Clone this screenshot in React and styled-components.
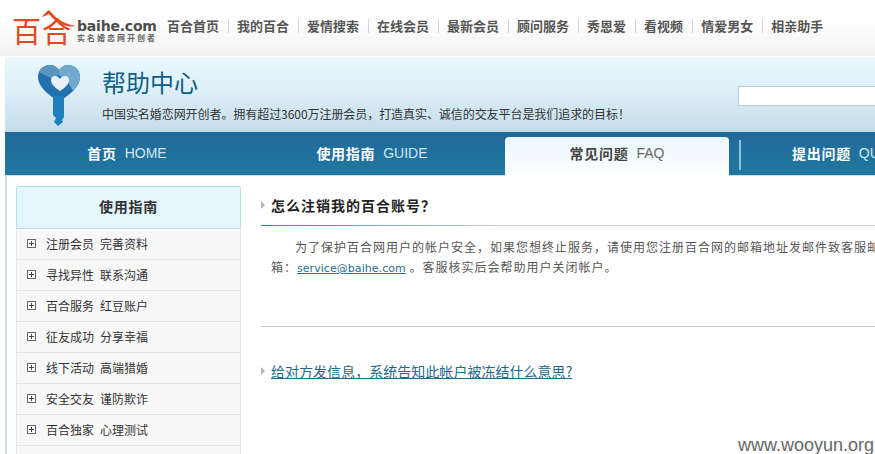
import React from "react";
import styled, { createGlobalStyle } from "styled-components";

const GlobalStyle = createGlobalStyle`
  html, body {
    margin: 0;
    padding: 0;
    background: #fff;
    overflow: hidden;
  }
  body {
    font-family: "Noto Sans CJK SC", "Liberation Sans", sans-serif;
    font-size: 12px;
    color: #333;
  }
`;

const Page = styled.div`
  position: relative;
  width: 875px;
  height: 454px;
  overflow: hidden;
  background: #fff;
`;

const TopBar = styled.div`
  display: flex;
  align-items: center;
  height: 56px;
  padding-left: 12px;
  background: linear-gradient(#fff 0%, #fff 35%, #f3f1f1 100%);
`;

const Logo = styled.div`
  position: relative;
  display: flex;
  align-items: center;
  width: 155px;
  height: 56px;
  flex-shrink: 0;
`;

const LogoMark = styled.span`
  width: 65px;
  font-size: 29px;
  line-height: 34px;
  letter-spacing: 1px;
  color: #e2481d;
  white-space: nowrap;
  margin-top: 3px;
`;

const Swoosh = styled.svg`
  position: absolute;
  left: 28px;
  top: 8px;
`;

const LogoWords = styled.div`
  display: flex;
  flex-direction: column;
  margin-top: 5px;
`;

const LogoDomain = styled.span`
  font-family: "DejaVu Sans", sans-serif;
  font-size: 14px;
  font-weight: 700;
  line-height: 14px;
  letter-spacing: -0.2px;
  color: #4d4d4d;
`;

const LogoSlogan = styled.span`
  font-size: 8px;
  font-weight: 700;
  line-height: 9px;
  letter-spacing: 2px;
  color: #666;
  white-space: nowrap;
`;

const Nav = styled.nav`
  display: flex;
  align-items: center;
  margin-top: -4px;
`;

const NavItem = styled.a`
  font-size: 13px;
  font-weight: 700;
  line-height: 14px;
  color: #555;
  padding-right: 9px;
  margin-right: 8px;
  border-right: 1px solid ${({ $last }) => ($last ? "transparent" : "#d4d4d4")};
  white-space: nowrap;
`;

const Main = styled.div`
  margin-left: 5px;
  border-left: 2px solid #c9dfe6;
  height: 398px;
`;

const Header = styled.div`
  display: flex;
  height: 75px;
  margin-left: -2px;
  margin-top: 1px;
  background: linear-gradient(#eaf8fe 0%, #dff0f8 40%, #c4dde9 100%);
`;

const KeyIcon = styled.svg`
  margin: 8px 0 0 32px;
  flex-shrink: 0;
`;

const HeaderText = styled.div`
  display: flex;
  flex-direction: column;
  margin-left: 21px;
  padding-top: 9px;
`;

const HeaderTitle = styled.h1`
  margin: 0;
  font-size: 24px;
  font-weight: 400;
  line-height: 32px;
  color: #0f5f86;
`;

const HeaderSlogan = styled.p`
  margin: 7px 0 0;
  font-size: 12px;
  line-height: 18px;
  letter-spacing: -0.06px;
  color: #333;
  white-space: nowrap;
`;

const SearchInput = styled.input`
  position: absolute;
  left: 738px;
  top: 86px;
  width: 200px;
  height: 18px;
  padding: 0;
  border: 1px solid #bccdd8;
  background: #fff;
`;

const Tabs = styled.div`
  display: flex;
  gap: 21px;
  height: 43px;
  margin-left: -2px;
  padding-left: 10px;
  background: linear-gradient(#22689a, #20789f);
  border-bottom: 1px solid #c9e2ea;
`;

const Tab = styled.a`
  position: relative;
  display: flex;
  align-items: center;
  justify-content: center;
  gap: 8px;
  flex: 0 0 224px;
  height: ${({ $active }) => ($active ? "39px" : "43px")};
  margin-top: ${({ $active }) => ($active ? "5px" : "0")};
  padding-bottom: ${({ $active }) => ($active ? "7px" : "1px")};
  box-sizing: border-box;
  border-radius: ${({ $active }) => ($active ? "4px 4px 0 0" : "0")};
  background: ${({ $active }) =>
    $active ? "linear-gradient(#e8f7fd, #fff)" : "transparent"};
  color: ${({ $active }) => ($active ? "#444" : "#fff")};
  white-space: nowrap;
`;

const TabDivider = styled.span`
  position: absolute;
  right: -12px;
  top: 3px;
  height: 30px;
  width: 2px;
  background: #8fc3dd;
`;

const TabName = styled.span`
  font-size: 14px;
  font-weight: 700;
  letter-spacing: 0.7px;
`;

const TabEnglish = styled.span`
  font-family: "Liberation Sans", sans-serif;
  font-size: 14px;
  color: ${({ $active }) => ($active ? "#666" : "#cfe6f1")};
`;

const Body = styled.div`
  display: flex;
  gap: 20px;
  padding: 10px 0 0 9px;
`;

const Sidebar = styled.aside`
  flex: 0 0 225px;
  width: 225px;
`;

const SidebarTitle = styled.div`
  height: 43px;
  box-sizing: border-box;
  line-height: 38px;
  text-align: center;
  font-size: 14px;
  font-weight: 700;
  letter-spacing: 0.7px;
  color: #333;
  background: #e3f6fc;
  border: 1px solid #b7e0ea;
  border-radius: 2px 2px 0 0;
`;

const SidebarList = styled.ul`
  margin: 0;
  padding: 0;
  list-style: none;
  border: 1px solid #e6e6e6;
  border-width: 0 1px;
`;

const SidebarRow = styled.li`
  display: flex;
  align-items: center;
  gap: 10px;
  height: 31px;
  box-sizing: border-box;
  padding: 0 0 2px 10px;
  background: #f8f8f8;
  border-bottom: 1px solid #e5e5e5;
  font-size: 12px;
  color: #333;
  white-space: nowrap;
`;

const PlusIcon = styled.svg`
  flex-shrink: 0;
`;

const RowText = styled.span`
  display: flex;
  gap: 6px;
`;

const Content = styled.main`
  flex: 1 0 700px;
`;

const QuestionTitle = styled.h2`
  display: flex;
  align-items: center;
  gap: 6px;
  height: 40px;
  box-sizing: border-box;
  padding-bottom: 2px;
  margin: 0;
  font-size: 14px;
  font-weight: 700;
  letter-spacing: 1px;
  color: #222;
  border-bottom: 1px solid transparent;
  border-image: linear-gradient(90deg, #2a88a8, #cfcfcf 35%) 1;
`;

const Arrow = styled.svg`
  flex-shrink: 0;
`;

const Answer = styled.p`
  margin: 11px 0 0;
  padding-left: 10px;
  font-size: 12px;
  line-height: 20px;
  letter-spacing: 1px;
  color: #555;
  white-space: nowrap;
`;

const Indent = styled.span`
  padding-left: 24px;
`;

const Email = styled.a`
  color: #1f6f96;
  text-decoration: underline;
  letter-spacing: 0.05px;
  font-family: "DejaVu Sans", sans-serif;
  font-size: 11px;
`;

const Rule = styled.hr`
  height: 1px;
  margin: 47px 0 0;
  border: 0;
  background: #ccc;
`;

const NextQuestion = styled.div`
  display: flex;
  align-items: center;
  gap: 6px;
  margin-top: 34px;
`;

const NextLink = styled.a`
  font-size: 14px;
  line-height: 20px;
  letter-spacing: 0.03px;
  color: #1b6a8a;
  text-decoration: underline;
  white-space: nowrap;
`;

const Watermark = styled.div`
  position: absolute;
  right: 1px;
  bottom: -1px;
  font-family: "Liberation Sans", sans-serif;
  font-size: 18px;
  line-height: 20px;
  color: #666;
`;

const navItems = [
  "百合首页",
  "我的百合",
  "爱情搜索",
  "在线会员",
  "最新会员",
  "顾问服务",
  "秀恩爱",
  "看视频",
  "情爱男女",
  "相亲助手",
];

const tabs = [
  { name: "首页", english: "HOME" },
  { name: "使用指南", english: "GUIDE" },
  { name: "常见问题", english: "FAQ", active: true },
  { name: "提出问题", english: "QUESTION" },
];

const guideRows = [
  ["注册会员", "完善资料"],
  ["寻找异性", "联系沟通"],
  ["百合服务", "红豆账户"],
  ["征友成功", "分享幸福"],
  ["线下活动", "高端猎婚"],
  ["安全交友", "谨防欺诈"],
  ["百合独家", "心理测试"],
  ["", ""],
];

const ArrowIcon = () => (
  <Arrow width="4" height="8" viewBox="0 0 4 8">
    <path d="M0 0 L4 4 L0 8 Z" fill="#b5b5b5" />
  </Arrow>
);

const App = () => {
  return (
    <Page>
      <GlobalStyle />
      <TopBar>
        <Logo>
          <LogoMark>百合</LogoMark>
          <Swoosh width="40" height="22" viewBox="0 0 40 22">
            <path d="M2 9 C5 5 7 3 9 2 C14 8 22 16 36 18 C26 20 16 15 9 6 C7 7 5 8 2 9 Z" fill="#e2481d" />
          </Swoosh>
          <LogoWords>
            <LogoDomain>baihe.com</LogoDomain>
            <LogoSlogan>实名婚恋网开创者</LogoSlogan>
          </LogoWords>
        </Logo>
        <Nav>
          {navItems.map((item, i) => (
            <NavItem key={item} $last={i === navItems.length - 1}>
              {item}
            </NavItem>
          ))}
        </Nav>
      </TopBar>
      <Main>
        <Header>
          <KeyIcon width="44" height="61" viewBox="0 0 44 61">
            <path d="M22 37 C12 30 1 22 1 12 C1 5 7 0 13 0 C17 0 20 2 22 5 C24 2 27 0 31 0 C38 0 43 5 43 12 C43 22 32 30 22 37 Z" fill="#2270ae" />
            <path d="M22 5 C24 2 27 0 31 0 C38 0 43 5 43 12 C43 17 40 22 36 26 C34 22 32 19 30 16 L22 10 Z" fill="#74a9cf" />
            <path d="M22 5 C20 2 17 0 13 0 C8 0 4 2 2 7 L14 13 L22 10 Z" fill="#5a94c0" />
            <path d="M23 26 C17 22 14 19 14 15 C14 12 16 11 18 11 C20 11 22 12 23 14 C24 12 26 11 28 11 C30 11 32 12 32 15 C32 19 29 22 23 26 Z" fill="#e6f2f8" />
            <path d="M16 31 L27 31 L27 52 L25 55 L26 57 L21 61 L17 57 L19 53 L16 50 Z" fill="#1f80bd" />
          </KeyIcon>
          <HeaderText>
            <HeaderTitle>帮助中心</HeaderTitle>
            <HeaderSlogan>
              中国实名婚恋网开创者。拥有超过3600万注册会员，打造真实、诚信的交友平台是我们追求的目标！
            </HeaderSlogan>
          </HeaderText>
        </Header>
        <SearchInput />
        <Tabs>
          {tabs.map((tab) => (
            <Tab key={tab.english} $active={tab.active}>
              <TabName>{tab.name}</TabName>
              <TabEnglish $active={tab.active}>{tab.english}</TabEnglish>
              {tab.active && <TabDivider />}
            </Tab>
          ))}
        </Tabs>
        <Body>
          <Sidebar>
            <SidebarTitle>使用指南</SidebarTitle>
            <SidebarList>
              {guideRows.map(([first, second], i) => (
                <SidebarRow key={i}>
                  {first && (
                    <PlusIcon width="9" height="9" viewBox="0 0 9 9">
                      <rect x="0.5" y="0.5" width="8" height="8" fill="#fff" stroke="#666" />
                      <path d="M2 4.5 H7 M4.5 2 V7" stroke="#444" />
                    </PlusIcon>
                  )}
                  <RowText>
                    <span>{first}</span>
                    <span>{second}</span>
                  </RowText>
                </SidebarRow>
              ))}
            </SidebarList>
          </Sidebar>
          <Content>
            <QuestionTitle>
              <ArrowIcon />
              怎么注销我的百合账号？
            </QuestionTitle>
            <Answer>
              <Indent>
                为了保护百合网用户的帐户安全，如果您想终止服务，请使用您注册百合网的邮箱地址发邮件致客服邮
              </Indent>
              <br />
              箱：<Email>service@baihe.com</Email> 。客服核实后会帮助用户关闭帐户。
            </Answer>
            <Rule />
            <NextQuestion>
              <ArrowIcon />
              <NextLink>给对方发信息，系统告知此帐户被冻结什么意思?</NextLink>
            </NextQuestion>
          </Content>
        </Body>
      </Main>
      <Watermark>www.wooyun.org</Watermark>
    </Page>
  );
};

export default App;
